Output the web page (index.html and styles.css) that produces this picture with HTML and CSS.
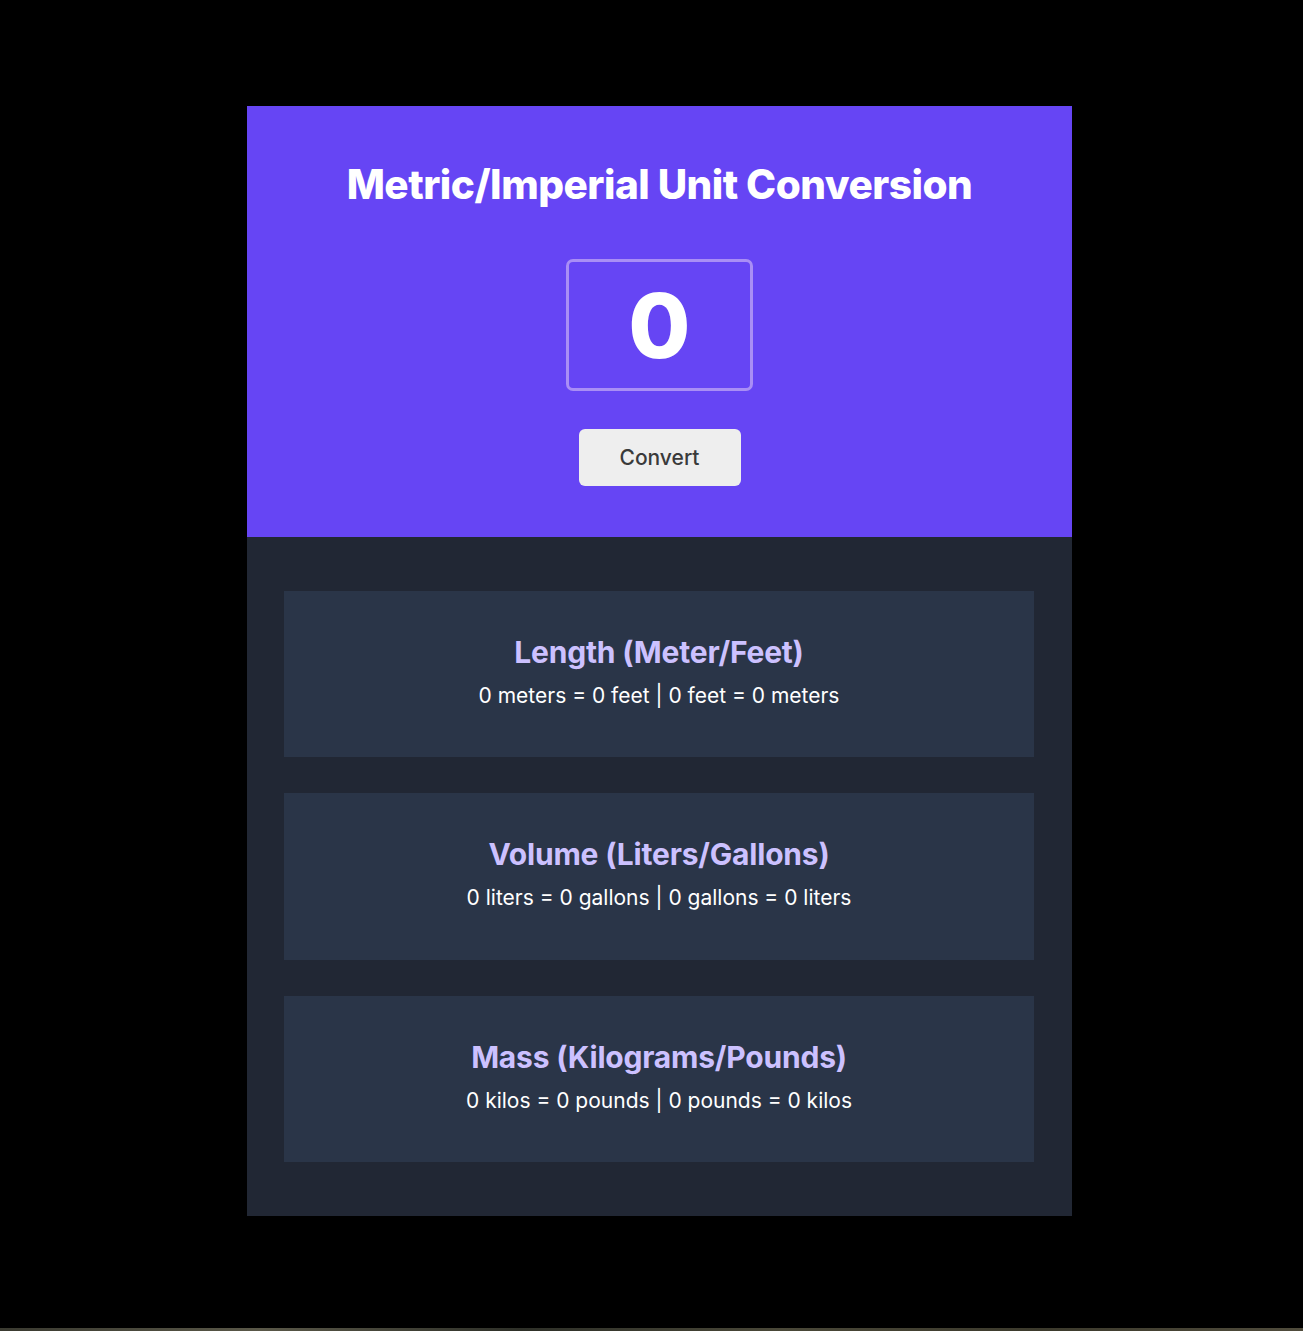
FILE: index.html
```html
<!DOCTYPE html>
<html lang="en">
<head>
<meta charset="utf-8">
<title>Unit Converter</title>
<link rel="stylesheet" href="styles.css">
</head>
<body>
<main class="app">
  <section class="hero">
    <h1 class="hero-title">Metric/Imperial Unit Conversion</h1>
    <input class="hero-input" type="text" value="0">
    <button class="hero-btn" type="button">Convert</button>
  </section>
  <section class="results">
    <div class="card">
      <h2 class="card-title">Length (Meter/Feet)</h2>
      <p class="card-text">0 meters = 0 feet | 0 feet = 0 meters</p>
    </div>
    <div class="card">
      <h2 class="card-title">Volume (Liters/Gallons)</h2>
      <p class="card-text">0 liters = 0 gallons | 0 gallons = 0 liters</p>
    </div>
    <div class="card">
      <h2 class="card-title">Mass (Kilograms/Pounds)</h2>
      <p class="card-text">0 kilos = 0 pounds | 0 pounds = 0 kilos</p>
    </div>
  </section>
</main>
<div class="strip"></div>
</body>
</html>
```
FILE: styles.css
```css
* { box-sizing: border-box; }
html, body { margin: 0; padding: 0; background: #000; }
body { font-family: Inter, "Noto Sans", sans-serif; }

.app {
  width: 825px;
  margin: 106px 0 0 247px;
}

.hero {
  background: #6645F4;
  display: flex;
  flex-direction: column;
  align-items: center;
  padding: 55px 0 51px;
}

.hero-title {
  margin: 0;
  color: #fff;
  font-size: 40.5px;
  line-height: 48px;
  font-weight: 800;
  letter-spacing: -0.5px;
}

.hero-input {
  margin-top: 50px;
  width: 187px;
  height: 132px;
  border: 3px solid #A98EF5;
  border-radius: 7px;
  background: transparent;
  color: #fff;
  text-align: center;
  font-family: Inter, sans-serif;
  font-size: 90px;
  font-weight: 800;
  outline: none;
  padding: 0;
}

.hero-btn {
  margin-top: 38px;
  width: 162px;
  height: 57px;
  border: none;
  border-radius: 6px;
  background: #EEEEEE;
  color: #3A3A3A;
  font-family: Inter, sans-serif;
  font-size: 21px;
  font-weight: 500;
}

.results {
  background: #212734;
  padding: 54px 38px 54px 37px;
  display: flex;
  flex-direction: column;
  gap: 36px;
}

.card {
  background: #2A3548;
  height: 166.4px;
  padding-top: 43px;
  text-align: center;
}

.card-title {
  margin: 0;
  color: #CCC1FF;
  font-size: 30px;
  line-height: 36px;
  font-weight: 700;
  letter-spacing: -0.2px;
}

.card-text {
  margin: 14px 0 0;
  color: #fff;
  font-size: 21px;
  line-height: 24px;
}

.strip {
  margin-top: 112px;
  height: 3px;
  background: linear-gradient(90deg, #3a3a30, #5a5848 20%, #2e3028 40%, #4a4838 60%, #3c3a2c 80%, #504c3c);
}
```
